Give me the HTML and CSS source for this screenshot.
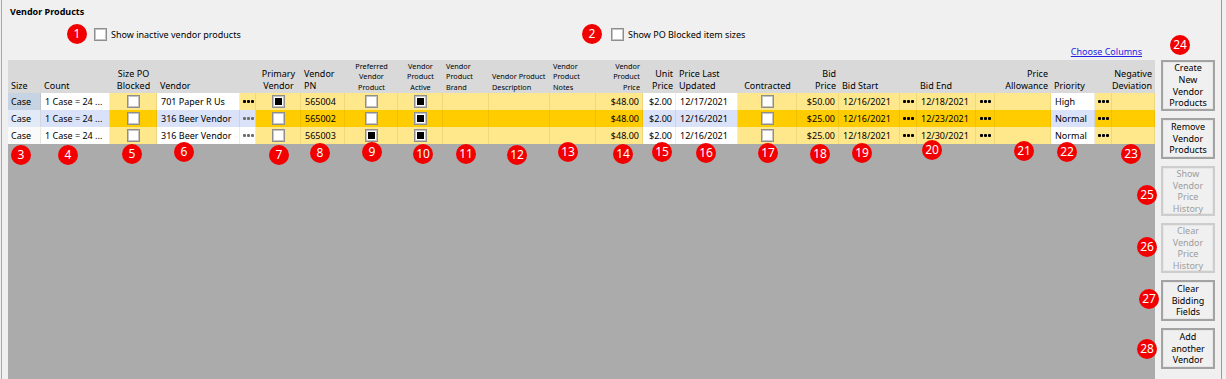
FILE: index.html
```html
<!DOCTYPE html>
<html lang="en">
<head>
  <meta charset="UTF-8">
  <title>Vendor Products</title>
  <link rel="stylesheet" href="styles.css">
</head>
<body>
<div class="page">
  <div class="panel">
    <h2 class="title">Vendor Products</h2>
    <div class="options">
      <label class="opt opt-inactive"><span class="box"></span>Show inactive vendor products</label>
      <label class="opt"><span class="box"></span>Show PO Blocked item sizes</label>
    </div>
    <div class="links"><a href="#" class="link">Choose Columns</a></div>

    <div class="main">
      <div class="grid-area">
        <div class="grid">
          <!-- header -->
          <div class="hd">Size</div>
          <div class="hd">Count</div>
          <div class="hd c">Size PO<br>Blocked</div>
          <div class="hd span2">Vendor</div>
          <div class="hd c">Primary<br>Vendor</div>
          <div class="hd">Vendor<br>PN</div>
          <div class="hd small c">Preferred<br>Vendor<br>Product</div>
          <div class="hd small c">Vendor<br>Product<br>Active</div>
          <div class="hd small">Vendor<br>Product<br>Brand</div>
          <div class="hd small">Vendor Product<br>Description</div>
          <div class="hd small">Vendor<br>Product<br>Notes</div>
          <div class="hd small r">Vendor<br>Product<br>Price</div>
          <div class="hd r">Unit<br>Price</div>
          <div class="hd">Price Last<br>Updated</div>
          <div class="hd c">Contracted</div>
          <div class="hd r">Bid<br>Price</div>
          <div class="hd span2">Bid Start</div>
          <div class="hd span2">Bid End</div>
          <div class="hd r">Price<br>Allowance</div>
          <div class="hd span2">Priority</div>
          <div class="hd r">Negative<br>Deviation</div>

          <!-- row 1 -->
          <div class="row r1">
            <div class="cell size sel">Case</div>
            <div class="cell w">1 Case = 24 ...</div>
            <div class="cell cb"><span class="box"></span></div>
            <div class="cell w">701 Paper R Us</div>
            <div class="cell dots"><i></i><i></i><i></i></div>
            <div class="cell cb"><span class="box on"></span></div>
            <div class="cell">565004</div>
            <div class="cell cb"><span class="box"></span></div>
            <div class="cell cb"><span class="box on"></span></div>
            <div class="cell"></div>
            <div class="cell"></div>
            <div class="cell"></div>
            <div class="cell r">$48.00</div>
            <div class="cell w r">$2.00</div>
            <div class="cell w">12/17/2021</div>
            <div class="cell cb"><span class="box"></span></div>
            <div class="cell r">$50.00</div>
            <div class="cell">12/16/2021</div>
            <div class="cell dots"><i></i><i></i><i></i></div>
            <div class="cell">12/18/2021</div>
            <div class="cell dots"><i></i><i></i><i></i></div>
            <div class="cell"></div>
            <div class="cell w">High</div>
            <div class="cell dots"><i></i><i></i><i></i></div>
            <div class="cell"></div>
          </div>

          <!-- row 2 -->
          <div class="row r2">
            <div class="cell size">Case</div>
            <div class="cell w">1 Case = 24 ...</div>
            <div class="cell cb"><span class="box"></span></div>
            <div class="cell w">316 Beer Vendor</div>
            <div class="cell dots w grey"><i></i><i></i><i></i></div>
            <div class="cell cb"><span class="box"></span></div>
            <div class="cell">565002</div>
            <div class="cell cb"><span class="box"></span></div>
            <div class="cell cb"><span class="box on"></span></div>
            <div class="cell"></div>
            <div class="cell"></div>
            <div class="cell"></div>
            <div class="cell r">$48.00</div>
            <div class="cell w r">$2.00</div>
            <div class="cell w">12/16/2021</div>
            <div class="cell cb"><span class="box"></span></div>
            <div class="cell r">$25.00</div>
            <div class="cell">12/16/2021</div>
            <div class="cell dots"><i></i><i></i><i></i></div>
            <div class="cell">12/23/2021</div>
            <div class="cell dots"><i></i><i></i><i></i></div>
            <div class="cell"></div>
            <div class="cell w">Normal</div>
            <div class="cell dots"><i></i><i></i><i></i></div>
            <div class="cell"></div>
          </div>

          <!-- row 3 -->
          <div class="row r3">
            <div class="cell size">Case</div>
            <div class="cell w">1 Case = 24 ...</div>
            <div class="cell cb"><span class="box"></span></div>
            <div class="cell w">316 Beer Vendor</div>
            <div class="cell dots w grey"><i></i><i></i><i></i></div>
            <div class="cell cb"><span class="box"></span></div>
            <div class="cell">565003</div>
            <div class="cell cb"><span class="box on"></span></div>
            <div class="cell cb"><span class="box on"></span></div>
            <div class="cell"></div>
            <div class="cell"></div>
            <div class="cell"></div>
            <div class="cell r">$48.00</div>
            <div class="cell w r">$2.00</div>
            <div class="cell w">12/16/2021</div>
            <div class="cell cb"><span class="box"></span></div>
            <div class="cell r">$25.00</div>
            <div class="cell">12/18/2021</div>
            <div class="cell dots"><i></i><i></i><i></i></div>
            <div class="cell">12/30/2021</div>
            <div class="cell dots"><i></i><i></i><i></i></div>
            <div class="cell"></div>
            <div class="cell w">Normal</div>
            <div class="cell dots"><i></i><i></i><i></i></div>
            <div class="cell"></div>
          </div>
        </div>
      </div>

      <div class="actions">
        <button class="btn tall">Create<br>New<br>Vendor<br>Products</button>
        <button class="btn">Remove<br>Vendor<br>Products</button>
        <button class="btn tall" disabled>Show<br>Vendor<br>Price<br>History</button>
        <button class="btn tall" disabled>Clear<br>Vendor<br>Price<br>History</button>
        <button class="btn">Clear<br>Bidding<br>Fields</button>
        <button class="btn">Add<br>another<br>Vendor</button>
      </div>
    </div>
  </div>
  <div class="edge-right"></div>

  <!-- annotation markers -->
  <span class="badge b1">1</span>
  <span class="badge b2">2</span>
  <span class="badge b3">3</span>
  <span class="badge b4">4</span>
  <span class="badge b5">5</span>
  <span class="badge b6">6</span>
  <span class="badge b7">7</span>
  <span class="badge b8">8</span>
  <span class="badge b9">9</span>
  <span class="badge b10">10</span>
  <span class="badge b11">11</span>
  <span class="badge b12">12</span>
  <span class="badge b13">13</span>
  <span class="badge b14">14</span>
  <span class="badge b15">15</span>
  <span class="badge b16">16</span>
  <span class="badge b17">17</span>
  <span class="badge b18">18</span>
  <span class="badge b19">19</span>
  <span class="badge b20">20</span>
  <span class="badge b21">21</span>
  <span class="badge b22">22</span>
  <span class="badge b23">23</span>
  <span class="badge b24">24</span>
  <span class="badge b25">25</span>
  <span class="badge b26">26</span>
  <span class="badge b27">27</span>
  <span class="badge b28">28</span>
</div>
</body>
</html>
```

FILE: styles.css
```css
:root {
  --panel: #f0f0f0;
  --header: #d9d9d9;
  --empty: #ababab;
  --yellow: #ffe78b;
  --yellow-dark: #ffcc00;
  --select: #d9e2f8;
  --badge: #f20000;
}

body {
  margin: 0;
  background-color: var(--panel);
  font-family: "Noto Sans", "Open Sans", sans-serif;
  font-size: 9px;
  color: #000;
}

.page {
  position: relative;
  display: flex;
  width: 1226px;
  height: 379px;
  overflow: hidden;
}

.panel {
  flex: 1;
  display: flex;
  flex-direction: column;
  margin-left: 1px;
  border-left: 1px solid #a7a7a7;
  padding: 5px 0 0 6px;
}

.edge-right {
  width: 4px;
  border-left: 1px solid #9a9a9a;
}

.title {
  margin: 0;
  padding-left: 2px;
  font-size: 9px;
  font-weight: bold;
  line-height: 13px;
}

.options {
  display: flex;
  align-items: center;
  height: 14px;
  margin-top: 9px;
}

.opt {
  display: flex;
  align-items: center;
  gap: 4px;
}

.opt-inactive {
  width: 517px;
  margin-left: 86px;
}

.links {
  display: flex;
  justify-content: flex-end;
  height: 19px;
  padding: 4px 79px 0 0;
  box-sizing: border-box;
  line-height: 13px;
}

.link {
  color: #2323e6;
  text-decoration: underline;
}

/* check boxes */
.box {
  display: inline-block;
  box-sizing: border-box;
  width: 13px;
  height: 13px;
  padding: 2px;
  background: #fff;
  border: 1px solid #8e8e8e;
  box-shadow: inset 0 0 0 1px #c4c4c4;
}

.box.on::after {
  content: "";
  display: block;
  width: 7px;
  height: 7px;
  background: #000;
}

/* grid */
.main {
  flex: 1;
  display: flex;
}

.grid-area {
  width: 1147px;
  background-color: var(--empty);
}

.grid {
  display: grid;
  grid-template-columns: 33px 69px 47px 83px 16px 45px 44px 53px 45px 46px 61px 46px 47px 33px 62px 59px 42px 61px 17px 59px 19px 56px 44px 17px 43px;
  grid-template-rows: 33px 17px 17px 17px;
}

.hd {
  display: flex;
  align-items: flex-end;
  padding: 0 3px 1px;
  background-color: var(--header);
  line-height: 12px;
  white-space: nowrap;
}

.hd.small {
  font-size: 7.3px;
  line-height: 10.3px;
}

.hd.c {
  justify-content: center;
  text-align: center;
}

.hd.r {
  justify-content: flex-end;
  text-align: right;
}

.hd.span2 {
  grid-column: span 2;
}

.row {
  display: contents;
}

.cell {
  padding: 0 4px;
  line-height: 17px;
  white-space: nowrap;
  overflow: hidden;
  background-color: var(--yellow);
  box-shadow: inset -1px 0 0 rgba(120, 100, 20, 0.12);
}

.r2 .cell {
  background-color: var(--yellow-dark);
}

.cell.r {
  text-align: right;
}

.cell.w {
  background-color: #fff;
}

.r2 .cell.w {
  background-color: var(--select);
}

.cell.size {
  padding-left: 3px;
  background-color: #fafafa;
}

.cell.size.sel {
  background-color: #c6d3e2;
}

.r2 .cell.size {
  background-color: #e2e9f7;
}

.cell.cb {
  display: flex;
  align-items: center;
  justify-content: center;
  padding: 0;
}

.cell.dots {
  display: flex;
  align-items: center;
  justify-content: center;
  gap: 1px;
  padding: 0;
}

.dots i {
  width: 3px;
  height: 3px;
  border-radius: 1px;
  background: #000;
}

.dots.grey i {
  background: #6e6e6e;
}

/* side buttons */
.actions {
  display: flex;
  flex-direction: column;
  gap: 7px;
  width: 66px;
  padding-left: 6px;
  box-sizing: border-box;
}

.btn {
  width: 54px;
  height: 41px;
  padding: 0;
  font: inherit;
  line-height: 11.7px;
  color: #000;
  background-color: var(--panel);
  border: 2px solid #a3a3a3;
  box-shadow: inset 0 0 0 1px #e6e6e6;
}

.btn.tall {
  height: 50px;
}

.btn:first-child {
  height: 51px;
}

.btn:disabled {
  color: #9d9d9d;
  border-color: #cdcdcd;
}

/* annotation markers */
.badge {
  position: absolute;
  display: flex;
  align-items: center;
  justify-content: center;
  width: 20px;
  height: 20px;
  margin: -10px 0 0 -10px;
  border-radius: 50%;
  background-color: var(--badge);
  color: #fff;
  font-size: 12px;
  line-height: 1;
}

.b1 { left: 77px; top: 34px; }
.b2 { left: 592px; top: 34px; }
.b3 { left: 21px; top: 155px; }
.b4 { left: 68px; top: 155px; }
.b5 { left: 132px; top: 154px; }
.b6 { left: 184px; top: 152px; }
.b7 { left: 279px; top: 155px; }
.b8 { left: 320px; top: 153px; }
.b9 { left: 372px; top: 152px; }
.b10 { left: 423px; top: 154px; }
.b11 { left: 466px; top: 154px; }
.b12 { left: 517px; top: 155px; }
.b13 { left: 568px; top: 152px; }
.b14 { left: 623px; top: 154px; }
.b15 { left: 662px; top: 152px; }
.b16 { left: 706px; top: 153px; }
.b17 { left: 768px; top: 153px; }
.b18 { left: 820px; top: 154px; }
.b19 { left: 862px; top: 153px; }
.b20 { left: 932px; top: 150px; }
.b21 { left: 1024px; top: 151px; }
.b22 { left: 1067px; top: 152px; }
.b23 { left: 1131px; top: 154px; }
.b24 { left: 1180px; top: 45px; }
.b25 { left: 1147px; top: 195px; }
.b26 { left: 1147px; top: 247px; }
.b27 { left: 1149px; top: 299px; }
.b28 { left: 1147px; top: 349px; }
```
